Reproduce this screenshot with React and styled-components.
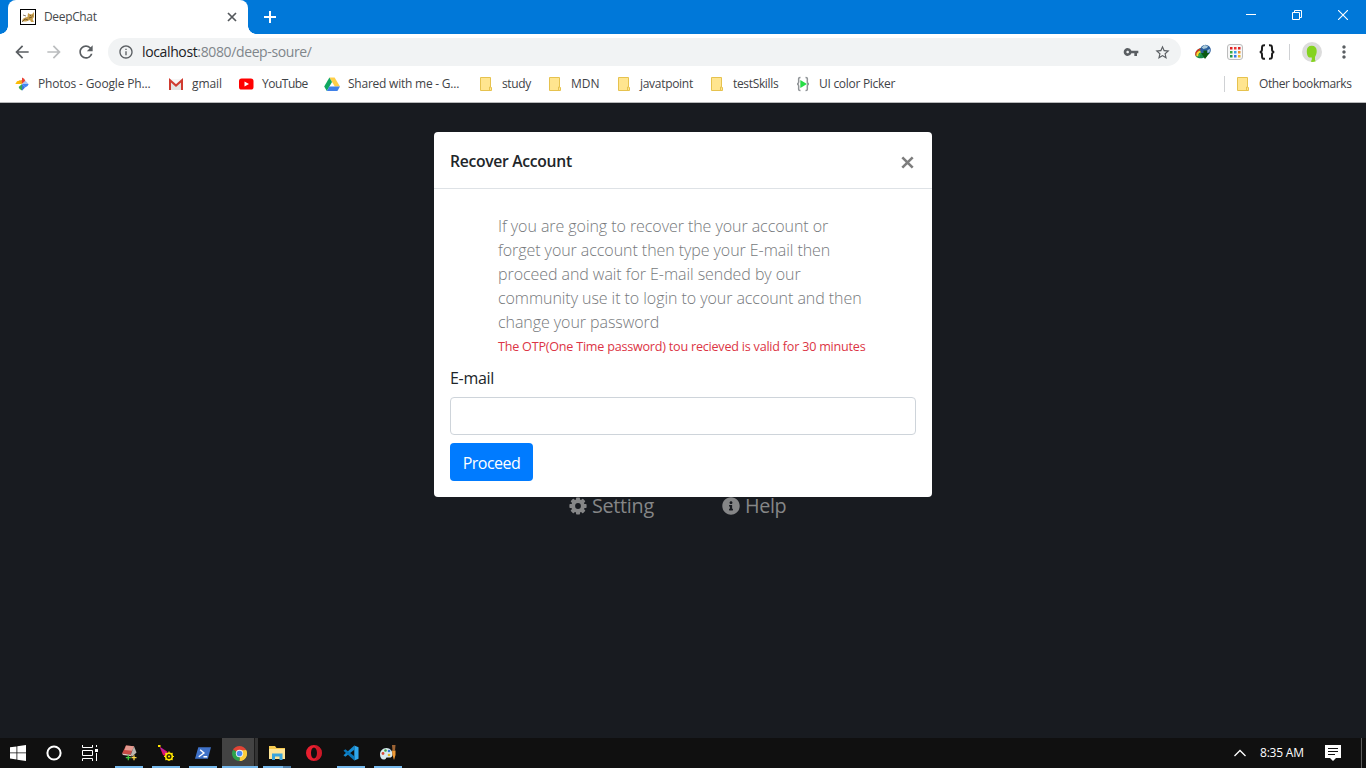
import React from "react";
import styled, { createGlobalStyle, css } from "styled-components";
import { MdVpnKey, MdStarBorder, MdInfoOutline, MdArrowBack, MdArrowForward, MdRefresh, MdMoreVert } from "react-icons/md";
import { FaInfoCircle } from "react-icons/fa";

const GlobalStyle = createGlobalStyle`
  * { box-sizing: border-box; }
  html, body { margin: 0; padding: 0; }
  body { width: 1366px; height: 768px; overflow: hidden; font-family: "Open Sans", "Noto Sans", sans-serif; }
  svg { display: block; flex: none; }
`;

const Screen = styled.div`
  width: 1366px;
  height: 768px;
  display: flex;
  flex-direction: column;
  overflow: hidden;
`;

const Label = styled.span`
  font-size: ${(p) => p.$size || 12}px;
  letter-spacing: ${(p) => p.$track || 0}px;
  color: ${(p) => p.$color || "inherit"};
  font-weight: ${(p) => p.$weight || 400};
  white-space: nowrap;
`;

/* ---------- browser chrome ---------- */

const TabStrip = styled.header`
  height: 34px;
  flex: none;
  display: flex;
  background: #0078d9;
  padding-left: 8px;
`;

const Tab = styled.div`
  position: relative;
  width: 240px;
  height: 34px;
  display: flex;
  align-items: center;
  padding: 0 11px 0 12px;
  border-radius: 8px 8px 0 0;
  background: #fff;
  color: #45494d;
  &::before, &::after {
    content: "";
    position: absolute;
    bottom: 0;
    width: 8px;
    height: 8px;
  }
  &::before { left: -8px; background: radial-gradient(circle at 0 0, transparent 7.5px, #fff 8px); }
  &::after { right: -8px; background: radial-gradient(circle at 100% 0, transparent 7.5px, #fff 8px); }
`;

const TabTitle = styled.div`
  display: flex;
  flex: 1;
  margin-left: 8px;
  padding-bottom: 2px;
`;

const NewTab = styled.div`
  display: flex;
  align-items: center;
  margin-left: 15px;
`;

const WindowControls = styled.div`
  margin-left: auto;
  display: flex;
`;

const WindowButton = styled.div`
  width: 46px;
  height: 29px;
  display: flex;
  align-items: center;
  justify-content: center;
`;

const Toolbar = styled.nav`
  height: 35px;
  flex: none;
  display: flex;
  align-items: center;
  background: #fff;
  padding: 1px 11px 0 12px;
  color: #5a5e62;
`;

const NavButton = styled.div`
  width: 20px;
  display: flex;
  justify-content: center;
  margin-right: 12px;
  color: ${(p) => (p.$dim ? "#bbbdbf" : "#5a5e62")};
`;

const AddressBar = styled.div`
  width: 1073px;
  height: 28px;
  border-radius: 14px;
  background: #f1f3f4;
  display: flex;
  align-items: center;
  padding: 0 10px 0 10px;
`;

const Url = styled.div`
  flex: 1;
  display: flex;
  margin-left: 8px;
  color: #202124;
  padding-bottom: 1px;
`;

const StarSlot = styled.div`
  margin-left: 15px;
`;

const Extensions = styled.div`
  display: flex;
  align-items: center;
  gap: 16px;
  margin-left: 14px;
`;

const Divider = styled.div`
  width: 1px;
  height: 16px;
  background: #cfd1d4;
`;

const ProfileArea = styled.div`
  display: flex;
  align-items: center;
  margin-left: 14px;
  gap: 12px;
`;

const BookmarkBar = styled.nav`
  height: 34px;
  flex: none;
  display: flex;
  align-items: center;
  background: #fff;
  border-bottom: 1px solid #b8b9ba;
  padding: 0 0 4px 14px;
  color: #3f4347;
`;

const Bookmark = styled.div`
  width: ${(p) => p.$width}px;
  display: flex;
  align-items: center;
  gap: 8px;
`;

const OtherBookmarks = styled.div`
  margin-left: auto;
  width: 142px;
  display: flex;
  align-items: center;
  gap: 10px;
`;

const OtherItem = styled.div`
  display: flex;
  align-items: center;
  gap: 8px;
`;

/* ---------- page ---------- */

const Page = styled.main`
  position: relative;
  flex: 1;
  background: #181b20;
  padding: 389px 0 0 569px;
`;

const Links = styled.div`
  display: flex;
  color: #858687;
`;

const PageLink = styled.div`
  width: 153px;
  height: 28px;
  display: flex;
  align-items: center;
  gap: 5px;
  ${Label} { margin-top: -2px; }
`;

const Modal = styled.section`
  position: absolute;
  left: 434px;
  top: 29px;
  width: 498px;
  height: 365px;
  display: flex;
  flex-direction: column;
  background: #fff;
  border-radius: 4px;
  color: #212529;
`;

const ModalHeader = styled.div`
  height: 57px;
  flex: none;
  display: flex;
  align-items: center;
  justify-content: space-between;
  padding: 1px 18px 0 16px;
  border-bottom: 1px solid #dee2e6;
`;

const CloseSlot = styled.div`
  padding-top: 4px;
`;

const ModalBody = styled.div`
  display: flex;
  flex-direction: column;
  padding: 24px 16px 16px;
`;

const Notice = styled.div`
  display: flex;
  flex-direction: column;
  padding-left: 48px;
  color: #76797c;
`;

const Line = styled.div`
  height: 24px;
  line-height: 26px;
  ${(p) => p.$danger && css`color: #dc3545; line-height: 24px;`}
`;

const FieldLabel = styled.label`
  height: 24px;
  line-height: 26px;
  margin: 8px 0;
`;

const Input = styled.input`
  height: 38px;
  width: 466px;
  border: 1px solid #ced4da;
  border-radius: 4px;
  background: #fff;
  outline: none;
`;

const Proceed = styled.button`
  width: 83px;
  height: 38px;
  margin-top: 8px;
  padding: 1px 0 0;
  border: 0;
  border-radius: 4px;
  background: #007bff;
  color: #fff;
  font-family: inherit;
`;

/* ---------- taskbar ---------- */

const Taskbar = styled.footer`
  height: 30px;
  flex: none;
  display: flex;
  background: #101010;
  color: #fff;
`;

const SystemButton = styled.div`
  width: 36px;
  display: flex;
  align-items: center;
  justify-content: center;
`;

const Apps = styled.div`
  display: flex;
  margin-left: 2px;
`;

const AppButton = styled.div`
  width: 37px;
  display: flex;
  flex-direction: column;
  align-items: center;
`;

const AppFace = styled.div`
  width: 36px;
  height: 28px;
  display: flex;
  align-items: center;
  justify-content: center;
  padding-top: 2px;
  ${(p) => p.$active && css`
    background: linear-gradient(90deg, #434343 32px, #1b1b1b 32px, #1b1b1b 33px, #343434 33px);
  `}
`;

const Underline = styled.div`
  height: 2px;
  width: ${(p) => (p.$state === "active" ? 36 : 28)}px;
  background: ${(p) =>
    p.$state === "none" ? "transparent" : p.$state === "stacked" ? "linear-gradient(90deg, #76b9ed 20px, #4d7ea8 20px)" : "#76b9ed"};
`;

const Tray = styled.div`
  margin-left: auto;
  display: flex;
  align-items: center;
`;

const Clock = styled.div`
  width: 65px;
  display: flex;
  margin-left: 14px;
  padding-bottom: 1px;
`;

const ShowDesktop = styled.div`
  width: 5px;
  height: 30px;
  margin-left: 20px;
  border-left: 1px solid #5c5c5c;
`;

/* ---------- icons ---------- */

const CatIcon = () => (
  <svg width="16" height="16" viewBox="0 0 16 16">
    <rect x=".5" y=".5" width="15" height="15" fill="#fff" stroke="#000" />
    <path d="M2 12.500C2 10 4 8.500 7.500 8L8 4l2 1.200h2L14 3v5l-1.500 2 1.500 3h-3l-1-2-4 1.500z" fill="#c69d4c" />
    <path d="M2 13l3-3 3 1m2-5l1 1m1.500-.5v.8M3 6l3 1M9 9l3-1" stroke="#564426" strokeWidth=".7" fill="none" />
  </svg>
);

const CrossIcon = ({ size, color, weight }) => (
  <svg width={size} height={size} viewBox="0 0 10 10" stroke={color} strokeWidth={weight}>
    <path d="M1 1l8 8M9 1L1 9" />
  </svg>
);

const PhotosIcon = () => (
  <svg width="16" height="16" viewBox="0 0 16 16">
    <path d="M8 8H1.300L3 5.200 6 4.400z" fill="#fbbc04" />
    <path d="M8 1.400A5 5 0 0 1 11.400 5L8 8z" fill="#ea4335" />
    <path d="M14.700 8A5 5 0 0 1 11 11.600L8 8z" fill="#4285f4" />
    <path d="M8 14.600A5 5 0 0 1 4.600 11L8 8z" fill="#34a853" />
    <path d="M8 8l3.500-3.200L14.600 8z" fill="#aac6f5" />
    <path d="M8 8l3 3.500L8 14.700z" fill="#3974dc" />
    <path d="M8 8L4.800 4.700 8 4z" fill="#f59a22" />
  </svg>
);

const GmailIcon = () => (
  <svg width="16" height="16" viewBox="0 0 16 16">
    <path d="M1 3h14v11H1z" fill="#e4e4e4" />
    <path d="M1 3l7 6.500L15 3z" fill="#f6f6f6" />
    <path d="M2 14V4.200l6 5.400 6-5.400V14" fill="none" stroke="#d03b30" strokeWidth="2" />
  </svg>
);

const YouTubeIcon = () => (
  <svg width="16" height="16" viewBox="0 0 16 16">
    <rect x="1" y="2.500" width="14.500" height="11" rx="2.600" fill="#f00" />
    <path d="M6.500 5.500v5L11 8z" fill="#fff" />
  </svg>
);

const DriveIcon = () => (
  <svg width="16" height="16" viewBox="0 0 16 16">
    <path d="M5.400 1.500h5.200L16 10.500h-5.200z" fill="#ffcf48" />
    <path d="M5.400 1.500L8 6 2.800 15 .2 10.500z" fill="#11a861" />
    <path d="M5.400 10.500H16L13.400 15H2.800z" fill="#3f80e8" />
  </svg>
);

const FolderIcon = () => (
  <svg width="16" height="16" viewBox="0 0 16 16">
    <path d="M2.500 1.500h10v9.500l1 .5v3h-11z" fill="#ffe58f" stroke="#e6c24e" />
    <path d="M11.500 14.500v-3.500h1.500" fill="none" stroke="#e6c24e" />
  </svg>
);

const PickerIcon = () => (
  <svg width="16" height="16" viewBox="0 0 16 16">
    <path d="M5.500 1.500C3 1.500 3.700 3 3.700 5.500S2 8 2 8s1.700 0 1.700 2.500-.7 4 1.800 4M10.500 1.500c2.500 0 1.800 1.500 1.800 4S14 8 14 8s-1.700 0-1.700 2.500.7 4-1.800 4" fill="none" stroke="#909497" strokeWidth="1.500" />
    <path d="M5.300 4L12 8l-6.700 4z" fill="#26dd45" />
  </svg>
);

const DownloadGlobe = () => (
  <svg width="16" height="16" viewBox="0 0 16 16">
    <path d="M.8 12.500C-1 7 4 3.500 7 4l5 8c-4 3-9 3-11.200.5z" fill="#17884a" />
    <path d="M.9 11.500C.5 6.500 5 4 8 6" fill="none" stroke="#e02a20" strokeWidth="1.300" />
    <path d="M2.500 12.300C1.500 8 6 5.500 9 10" fill="none" stroke="#ffd72f" strokeWidth="2" />
    <path d="M4 13C4 9.500 6.500 8.500 9 11" fill="none" stroke="#2fb04a" strokeWidth="1.300" />
    <circle cx="10.500" cy="6" r="5.300" fill="#2b5f9d" />
    <path d="M6.500 3.500l3-2.500 3.500 1-1 2-3.500 1zM12.500 6l2.500-1-.5 3-2 1z" fill="#a9c9d8" />
    <path d="M8.500 6.500h3.500v2.500h2.500L10 15 6 9h2.500z" fill="#0b5a12" />
  </svg>
);

const PaletteGrid = () => {
  const colors = [
    ["#d22", "#e33", "#d22"],
    ["#3aa845", "#36a2e8", "#e8902b"],
    ["#24964a", "#3677e8", "#eab42b"],
  ];
  return (
    <svg width="16" height="16" viewBox="0 0 16 16">
      <rect x=".5" y=".5" width="15" height="15" rx="2.500" fill="#f7f7f7" stroke="#bcbcbc" />
      {colors.map((row, r) =>
        row.map((fill, c) => <rect key={`${r}${c}`} x={3 + c * 4} y={3 + r * 4} width="2.500" height="2.500" fill={fill} />)
      )}
    </svg>
  );
};

const BracesIcon = () => (
  <svg width="16" height="16" viewBox="0 0 16 16" fill="none" stroke="#1c1c1c" strokeWidth="2">
    <path d="M6 1.200C3.500 1 3 2 3 4s.2 4-2.300 4C3.200 8 3 10 3 12s.5 3 3 2.800M10 1.200c2.500-.2 3 .8 3 2.800s-.2 4 2.300 4C12.800 8 13 10 13 12s-.5 3-3 2.800" />
  </svg>
);

const Avatar = () => (
  <svg width="20" height="20" viewBox="0 0 20 20">
    <circle cx="10" cy="10" r="10" fill="#dcdcdc" />
    <path d="M9.700 3.700c3.300 0 5 2 5 5.300 0 2.800-.9 4.500-1.700 6v3l.8 1.200c-1.500.7-3.500.8-5 .6l1-2.300V15.500H7.500C5.500 15 4.800 12 4.800 9c0-3.300 1.600-5.300 4.900-5.300z" fill="#85d321" />
  </svg>
);

const WindowsLogo = () => (
  <svg width="16" height="16" viewBox="0 0 16 16" fill="#fff">
    <path d="M0 2.300l6.500-.9v6.100H0zM7.300 1.300L16 0v7.500H7.300zM0 8.300h6.500v6.200L0 13.600zM7.300 8.300H16V16l-8.700-1.300z" />
  </svg>
);

const CortanaRing = () => (
  <svg width="16" height="16" viewBox="0 0 16 16">
    <circle cx="8" cy="8" r="6.600" fill="none" stroke="#fff" strokeWidth="2" />
  </svg>
);

const TaskViewIcon = () => (
  <svg width="18" height="16" viewBox="0 0 18 16" fill="none" stroke="#fff">
    <path d="M1.500 0v2.500h10V0M1.500 5.500h10v5h-10zM1.500 16v-2.500h10V16M15.500 0v2M15.500 8v8" />
    <path d="M14 4h3v3h-3z" fill="#fff" stroke="none" />
  </svg>
);

const BoxIcon = () => (
  <svg width="16" height="16" viewBox="0 0 16 16">
    <path d="M5 .5l8 .8L9.800 9.800 1 8.500z" fill="#c94a44" />
    <path d="M5 .5l8 .8-1.800 4.500-7.700-.9z" fill="#e39a90" />
    <path d="M13 1.300L15.500 7.500 11 11.800 9.800 9.800z" fill="#b9b4b0" />
    <path d="M1 8.500l8.800 1.300.7 1.500L2 10z" fill="#e6c4bf" />
    <path d="M7.300 10.200v5M4.800 12.700h5" stroke="#42c63c" strokeWidth="1.300" />
    <path d="M13 10.200v5M10.500 12.700h5" stroke="#ffd54a" strokeWidth="1.300" />
  </svg>
);

const WandIcon = () => (
  <svg width="16" height="16" viewBox="0 0 16 16">
    <path d="M1.500 1.500L9 6.500l1 3-2 2-3-1.500z" fill="#e0106e" />
    <path d="M3 3l5.500 6" stroke="#8d35c8" />
    <path d="M0 0h2.500v2H0z" fill="#ffe600" />
    <circle cx="11" cy="11.500" r="3.300" fill="#2a2600" stroke="#ffe600" strokeWidth="1.600" />
    <circle cx="11" cy="11.500" r="1.100" fill="#ffe600" />
    <path d="M11 6.500v2M11 14.500v1.500M6 11.500h2M14 11.500h2M7.500 8l1.200 1.200M14.500 8l-1.200 1.200M7.500 15l1.200-1.200M14.500 15l-1.200-1.200" stroke="#ffe600" strokeWidth="1.200" />
  </svg>
);

const PowerShellIcon = () => (
  <svg width="16" height="16" viewBox="0 0 17 16">
    <path d="M3.500 2H17l-3.300 12H0z" fill="#3f72c9" />
    <path d="M5.500 4.500l4 3.500-5.500 4M9 12h4" fill="none" stroke="#fff" strokeWidth="1.500" />
  </svg>
);

const ChromeIcon = () => (
  <svg width="15" height="15" viewBox="0 0 16 16">
    <path d="M8 8L1.100 4A8 8 0 0 1 14.900 4z" fill="#e14435" />
    <path d="M8 8l6.900-4A8 8 0 0 1 8 16z" fill="#fccc3c" />
    <path d="M8 8v8A8 8 0 0 1 1.100 4z" fill="#2da14c" />
    <path d="M8 4.400h7.100A8 8 0 0 1 8 16l3-6.300z" fill="#fccc3c" />
    <circle cx="8" cy="8" r="3.900" fill="#f3f3f3" />
    <circle cx="8" cy="8" r="3" fill="#4a8af4" />
  </svg>
);

const ExplorerIcon = () => (
  <svg width="16" height="16" viewBox="0 0 16 16">
    <path d="M0 1h6l1.500 2H16v11H0z" fill="#f5c94f" />
    <path d="M0 4h16v10H0z" fill="#ffe596" />
    <path d="M3 15V8.500h10.500V15h-3v-3.500H6V15z" fill="#3ba5dc" />
  </svg>
);

const OperaIcon = () => (
  <svg width="16" height="16" viewBox="0 0 16 16">
    <path fillRule="evenodd" d="M8 0a8 8 0 1 0 0 16A8 8 0 0 0 8 0zm0 2.500c1.800 0 3 2.300 3 5.500s-1.200 5.500-3 5.500S5 11.200 5 8s1.200-5.500 3-5.500z" fill="#e81f2f" />
    <path d="M8 0a8 8 0 0 1 0 16c4-2 4.500-13 0-16z" fill="#ad1020" opacity=".45" />
  </svg>
);

const CodeIcon = () => (
  <svg width="16" height="16" viewBox="0 0 17 16">
    <path d="M12 0l4.500 2v12L12 16z" fill="#30a8ed" />
    <path d="M12 0v4.500L2.500 12 .5 10.400z" fill="#1489cf" />
    <path d="M12 16v-4.500L2.500 4 .5 5.600z" fill="#0876ba" />
  </svg>
);

const PaintIcon = () => (
  <svg width="16" height="16" viewBox="0 0 16 16">
    <path d="M6.500 3C2.500 3 0 6 0 9.500S2 15 4.500 14.500 5 12 8 12.500s4.500-.5 4.500-3.500S10 3 6.500 3z" fill="#d8e9ef" />
    <circle cx="3" cy="8.500" r="1.400" fill="#d84834" />
    <circle cx="5.500" cy="5.500" r="1.300" fill="#43a545" />
    <circle cx="9" cy="6" r="1.300" fill="#3678d4" />
    <circle cx="9" cy="10" r="1.300" fill="#e2b524" />
    <path d="M12 0h3.500L15 5.500h-2.500z" fill="#9c6334" />
    <path d="M12 5.500h3.500v4.500L14 15l-1.500-5z" fill="#ee9934" />
  </svg>
);

const NotificationIcon = () => (
  <svg width="16" height="16" viewBox="0 0 16 16">
    <path d="M0 0h16v13h-5l-3 3-3-3H0z" fill="#fff" />
    <path d="M3 3.500h10M3 6.500h10M3 9.500h7" stroke="#101010" />
  </svg>
);

const GearIcon = () => (
  <svg width="18" height="18" viewBox="0 0 18 18">
    <g fill="currentColor">
      {[0, 45, 90, 135].map((a) => (
        <rect key={a} x="7" y=".4" width="4" height="17.200" rx=".8" transform={`rotate(${a} 9 9)`} />
      ))}
      <circle cx="9" cy="9" r="6.800" />
    </g>
    <circle cx="9" cy="9" r="2.900" fill="#181b20" />
  </svg>
);

/* ---------- data ---------- */

const bookmarks = [
  { text: "Photos - Google Ph...", width: 154, track: -0.15, Icon: PhotosIcon },
  { text: "gmail", width: 70, track: -0.1, Icon: GmailIcon },
  { text: "YouTube", width: 86, track: -0.5, Icon: YouTubeIcon },
  { text: "Shared with me - G...", width: 154, track: -0.23, Icon: DriveIcon },
  { text: "study", width: 69, track: -0.35, Icon: FolderIcon },
  { text: "MDN", width: 69, track: 0, Icon: FolderIcon },
  { text: "javatpoint", width: 93, track: -0.3, Icon: FolderIcon },
  { text: "testSkills", width: 86, track: -0.34, Icon: FolderIcon },
  { text: "UI color Picker", width: 110, track: -0.28, Icon: PickerIcon },
];

const notice = [
  "If you are going to recover the your account or",
  "forget your account then type your E-mail then",
  "proceed and wait for E-mail sended by our",
  "community use it to login to your account and then",
  "change your password",
];

const apps = [
  { id: "box", Icon: BoxIcon, state: "open" },
  { id: "wand", Icon: WandIcon, state: "open" },
  { id: "shell", Icon: PowerShellIcon, state: "open" },
  { id: "chrome", Icon: ChromeIcon, state: "active" },
  { id: "files", Icon: ExplorerIcon, state: "stacked" },
  { id: "opera", Icon: OperaIcon, state: "none" },
  { id: "code", Icon: CodeIcon, state: "open" },
  { id: "paint", Icon: PaintIcon, state: "open" },
];

export default function App() {
  return (
    <Screen>
      <GlobalStyle />
      <TabStrip>
        <Tab>
          <CatIcon />
          <TabTitle><Label $track={-0.35}>DeepChat</Label></TabTitle>
          <CrossIcon size={10} color="#54585c" weight={1.7} />
        </Tab>
        <NewTab>
          <svg width="14" height="14" viewBox="0 0 14 14" stroke="#fff" strokeWidth="2"><path d="M7 1v12M1 7h12" /></svg>
        </NewTab>
        <WindowControls>
          <WindowButton><svg width="10" height="10" viewBox="0 0 10 10" stroke="#fff"><path d="M0 4.500h10" /></svg></WindowButton>
          <WindowButton>
            <svg width="10" height="10" viewBox="0 0 10 10" stroke="#fff" fill="none"><path d="M.5 2.500h7v7h-7zM2.500 2.500v-2h7v7h-2" /></svg>
          </WindowButton>
          <WindowButton><svg width="10" height="10" viewBox="0 0 10 10" stroke="#fff" strokeWidth="1.100"><path d="M0 0l10 10M10 0L0 10" /></svg></WindowButton>
        </WindowControls>
      </TabStrip>

      <Toolbar>
        <NavButton><MdArrowBack size={20} /></NavButton>
        <NavButton $dim><MdArrowForward size={20} /></NavButton>
        <NavButton><MdRefresh size={20} /></NavButton>
        <AddressBar>
          <MdInfoOutline size={16} />
          <Url>
            <Label $size={14} $track={-0.37}>localhost</Label>
            <Label $size={14} $track={-0.37} $color="#80868b">:8080/deep-soure/</Label>
          </Url>
          <MdVpnKey size={16} />
          <StarSlot><MdStarBorder size={17} /></StarSlot>
        </AddressBar>
        <Extensions>
          <DownloadGlobe />
          <PaletteGrid />
          <BracesIcon />
        </Extensions>
        <ProfileArea>
          <Divider />
          <Avatar />
          <MdMoreVert size={20} />
        </ProfileArea>
      </Toolbar>

      <BookmarkBar>
        {bookmarks.map(({ text, width, track, Icon }) => (
          <Bookmark key={text} $width={width}>
            <Icon />
            <Label $track={track}>{text}</Label>
          </Bookmark>
        ))}
        <OtherBookmarks>
          <Divider />
          <OtherItem>
            <FolderIcon />
            <Label $track={-0.4}>Other bookmarks</Label>
          </OtherItem>
        </OtherBookmarks>
      </BookmarkBar>

      <Page>
        <Links>
          <PageLink><GearIcon /><Label $size={19.800} $track={-0.3}>Setting</Label></PageLink>
          <PageLink><FaInfoCircle size={18} /><Label $size={19.800} $track={-0.4}>Help</Label></PageLink>
        </Links>
        <Modal>
          <ModalHeader>
            <Label $size={15.700} $weight={600} $track={-0.3}>Recover Account</Label>
            <CloseSlot><CrossIcon size={13} color="#7d7d7d" weight={2} /></CloseSlot>
          </ModalHeader>
          <ModalBody>
            <Notice>
              {notice.map((text) => (
                <Line key={text}><Label $size={16} $weight={300} $track={-0.06}>{text}</Label></Line>
              ))}
              <Line $danger><Label $size={12.600} $track={-0.225}>The OTP(One Time password) tou recieved is valid for 30 minutes</Label></Line>
            </Notice>
            <FieldLabel htmlFor="email"><Label $size={16} $track={-0.3}>E-mail</Label></FieldLabel>
            <Input id="email" />
            <Proceed><Label $size={16} $track={-0.5}>Proceed</Label></Proceed>
          </ModalBody>
        </Modal>
      </Page>

      <Taskbar>
        <SystemButton><WindowsLogo /></SystemButton>
        <SystemButton><CortanaRing /></SystemButton>
        <SystemButton><TaskViewIcon /></SystemButton>
        <Apps>
          {apps.map(({ id, Icon, state }) => (
            <AppButton key={id}>
              <AppFace $active={state === "active"}><Icon /></AppFace>
              <Underline $state={state} />
            </AppButton>
          ))}
        </Apps>
        <Tray>
          <svg width="12" height="8" viewBox="0 0 12 8" fill="none" stroke="#fff" strokeWidth="1.300"><path d="M.5 7L6 1.500 11.500 7" /></svg>
          <Clock><Label $track={-0.2}>8:35 AM</Label></Clock>
          <NotificationIcon />
          <ShowDesktop />
        </Tray>
      </Taskbar>
    </Screen>
  );
}
